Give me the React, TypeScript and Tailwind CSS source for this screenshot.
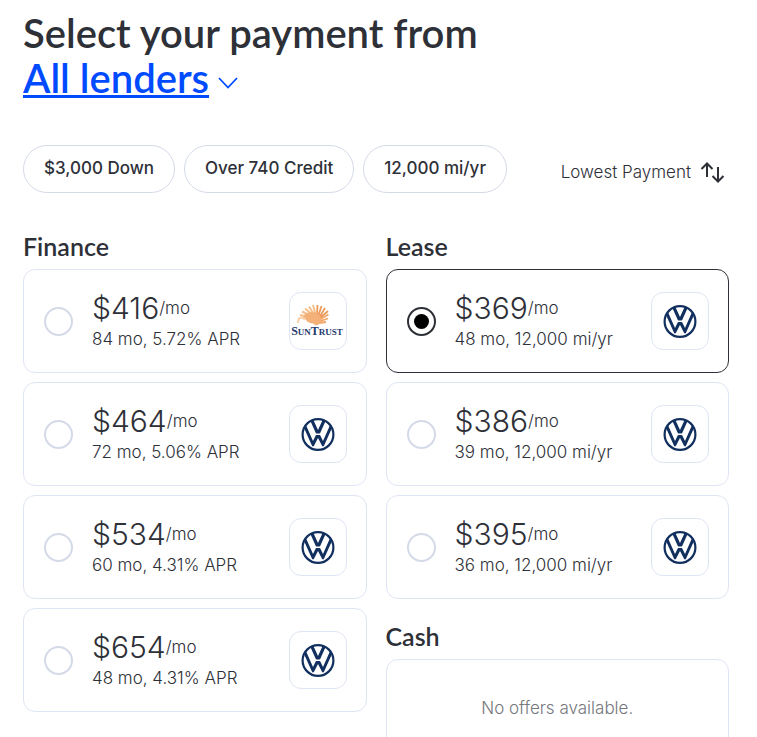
import type { ReactNode } from "react";

type Offer = {
  id: string;
  price: string;
  terms: string;
  lender: "vw" | "suntrust";
};

const financeOffers: Offer[] = [
  { id: "finance-84", price: "$416", terms: "84 mo, 5.72% APR", lender: "suntrust" },
  { id: "finance-72", price: "$464", terms: "72 mo, 5.06% APR", lender: "vw" },
  { id: "finance-60", price: "$534", terms: "60 mo, 4.31% APR", lender: "vw" },
  { id: "finance-48", price: "$654", terms: "48 mo, 4.31% APR", lender: "vw" },
];

const leaseOffers: Offer[] = [
  { id: "lease-48", price: "$369", terms: "48 mo, 12,000 mi/yr", lender: "vw" },
  { id: "lease-39", price: "$386", terms: "39 mo, 12,000 mi/yr", lender: "vw" },
  { id: "lease-36", price: "$395", terms: "36 mo, 12,000 mi/yr", lender: "vw" },
];

const filters = ["$3,000 Down", "Over 740 Credit", "12,000 mi/yr"];

function VwLogo() {
  return (
    <svg viewBox="0 0 34 34" className="size-[34px]" fill="#12305f" role="img" aria-label="Volkswagen">
      <circle cx="17" cy="17.500" r="15.400" fill="none" stroke="#12305f" strokeWidth="2.2" />
      {/* V */}
      <path d="M9.400 4 L14.800 16 Q15 16.400 15.500 16.400 H18.500 Q19 16.400 19.200 16 L24.600 4 L21.600 2.900 L17 13.100 L12.400 2.900 Z" />
      {/* W */}
      <path d="M2.800 10.600 L11 28.800 Q12 30.200 13 28.800 L17 20.900 L21 28.800 Q22 30.200 23 28.800 L31.200 10.600 L29.300 7.500 L22 24.100 L19.300 18.400 Q19.100 18 18.700 18 H15.300 Q14.900 18 14.700 18.400 L12 24.100 L4.700 7.500 Z" />
    </svg>
  );
}

function SunTrustLogo() {
  return (
    <svg viewBox="0 0 54 34" className="h-[34px] w-[54px]" role="img" aria-label="SunTrust">
      <g fill="none" strokeLinecap="butt">
        <path d="M22 14 L9 11 M22 13 L11 7.500 M23 12 L14 4.500 M24 12 L18 2.500 M25 12 L22 1" stroke="#f7c08b" strokeWidth="2" />
        <path d="M26 12 L26.500 1 M27 13 L30.500 2 M28 14 L34 4 M28 15 L37 7" stroke="#ec9a58" strokeWidth="1.8" />
        <path d="M28 16 L37.500 10.500 M28 17.500 L37 14.500 M28 19 L35 18" stroke="#f0a567" strokeWidth="1.8" />
        <path d="M7 19 C7 13 11 12 14 16" stroke="#f9cfa5" strokeWidth="2" />
      </g>
      <path d="M12 13 C15 7 24 6 29 12 C32 17 30 21 24 21.500 C24 19 20 20 17 18 C15 17 15 14 12 13 Z" fill="#f3b079" />
      <text
        x="26"
        y="31"
        textAnchor="middle"
        className="font-['Liberation_Serif',serif] font-bold"
        fill="#1f3a6e"
        fontSize="12"
      >
        S<tspan fontSize="9">UN</tspan>T<tspan fontSize="9">RUST</tspan>
      </text>
    </svg>
  );
}

function SectionTitle({ children }: { children: ReactNode }) {
  return <h2 className="mb-[10px] font-['Lato',sans-serif] text-[25px] leading-[26px] font-semibold">{children}</h2>;
}

function OfferCard({ offer, selected }: { offer: Offer; selected?: boolean }) {
  return (
    <label
      htmlFor={offer.id}
      className="flex h-[104px] cursor-pointer items-center rounded-xl border border-[#dfe5f5] pr-[19px] pl-5 has-checked:border-[#2e3038]"
    >
      <input
        type="radio"
        id={offer.id}
        name="offer"
        defaultChecked={selected}
        className="grid size-[29px] shrink-0 appearance-none place-items-center rounded-full border-2 border-[#d5dae8] checked:border-[#2e3038] checked:before:size-[15px] checked:before:rounded-full checked:before:bg-black"
      />
      <span className="ml-[19px] flex-1 pt-1">
        <span className="flex leading-8">
          <span className="text-[30px] font-light">{offer.price}</span>
          <span className="text-[17px] font-light">/mo</span>
        </span>
        <span className="block text-[17px] leading-[30px] font-light">{offer.terms}</span>
      </span>
      <span className="grid size-[58px] shrink-0 place-items-center rounded-xl border border-[#dfe5f5]">
        {offer.lender === "vw" ? <VwLogo /> : <SunTrustLogo />}
      </span>
    </label>
  );
}

export default function App() {
  return (
    <main className="min-h-screen bg-white pt-[11px] pr-7 pl-[23px] font-['Inter',sans-serif] text-[#2e3038]">
      <h1 className="font-['Lato',sans-serif] text-[40px] leading-[45px] font-semibold">
        Select your payment from
        <br />
        <button type="button" className="flex cursor-pointer items-center gap-2 text-[#004bff]">
          <span className="underline decoration-3 underline-offset-2">All lenders</span>
          <svg viewBox="0 0 22 14" className="mt-2 h-[14px] w-[22px]" fill="none" stroke="currentColor" strokeWidth="1.8" aria-hidden="true">
            <path d="M2 2 L11 11.500 L20 2" />
          </svg>
        </button>
      </h1>

      <div className="mt-11 flex items-center justify-between">
        <div className="flex gap-[9px]">
          {filters.map((filter) => (
            <button
              key={filter}
              type="button"
              className="h-12 cursor-pointer rounded-full border border-[#d5dae8] px-5 text-[17px] font-medium whitespace-nowrap"
            >
              {filter}
            </button>
          ))}
        </div>
        <button type="button" className="mt-2 mr-1 flex cursor-pointer items-center gap-[9px] text-[17px] font-light whitespace-nowrap">
          Lowest Payment
          <svg viewBox="0 0 25 22" className="h-[22px] w-[25px]" fill="none" stroke="currentColor" strokeWidth="2" aria-hidden="true">
            <path d="M7 15 V1.500 M1.500 7 L7 1.500 L12.500 7" />
            <path d="M18 5 V19.500 M12.500 14 L18 19.500 L23.500 14" />
          </svg>
        </button>
      </div>

      <div className="mt-10 grid grid-cols-2 gap-[19px]">
        <section>
          <SectionTitle>Finance</SectionTitle>
          <div className="flex flex-col gap-[9px]">
            {financeOffers.map((offer) => (
              <OfferCard key={offer.id} offer={offer} />
            ))}
          </div>
        </section>

        <div>
          <section>
            <SectionTitle>Lease</SectionTitle>
            <div className="flex flex-col gap-[9px]">
              {leaseOffers.map((offer, i) => (
                <OfferCard key={offer.id} offer={offer} selected={i === 0} />
              ))}
            </div>
          </section>
          <section className="mt-6">
            <SectionTitle>Cash</SectionTitle>
            <p className="rounded-xl border border-[#dfe5f5] py-9 text-center text-[17px] leading-6 font-light text-[#75777d]">
              No offers available.
            </p>
          </section>
        </div>
      </div>
    </main>
  );
}
